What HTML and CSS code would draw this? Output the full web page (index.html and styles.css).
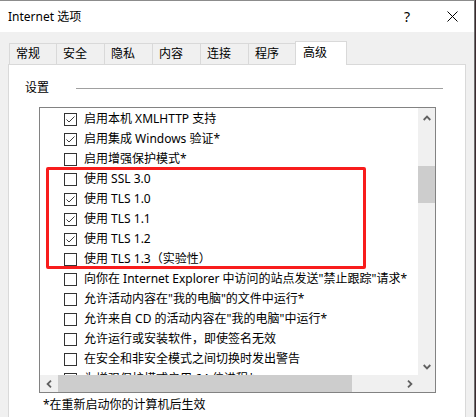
FILE: index.html
```html
<!DOCTYPE html>
<html lang="zh-CN">
<head>
<meta charset="utf-8">
<title>Internet 选项</title>
<link rel="stylesheet" href="styles.css">
</head>
<body>
<div class="window">
  <div class="titlebar">
    <span class="title">Internet 选项</span>
    <span class="help">?</span>
    <svg class="close" width="11" height="11" viewBox="0 0 11 11"><path d="M0.5 0.5 L10.5 10.5 M10.5 0.5 L0.5 10.5" stroke="#000" stroke-width="1" fill="none"/></svg>
  </div>
  <div class="body">
    <div class="tabs">
      <div class="tab narrow">常规</div>
      <div class="tab">安全</div>
      <div class="tab">隐私</div>
      <div class="tab">内容</div>
      <div class="tab">连接</div>
      <div class="tab narrow">程序</div>
      <div class="tab active">高级</div>
    </div>
    <div class="panel">
      <div class="group"><span class="group-label">设置</span><span class="group-line"></span></div>
      <div class="listbox">
        <div class="list">
          <div class="row"><span class="cb"><svg width="11" height="11" viewBox="0 0 11 11"><path d="M1.5 5.5 L4 8 L9.5 2.5" stroke="#3c3c3c" stroke-width="1" fill="none"/></svg></span>启用本机 XMLHTTP 支持</div>
          <div class="row"><span class="cb"><svg width="11" height="11" viewBox="0 0 11 11"><path d="M1.5 5.5 L4 8 L9.5 2.5" stroke="#3c3c3c" stroke-width="1" fill="none"/></svg></span>启用集成 Windows 验证*</div>
          <div class="row"><span class="cb"></span>启用增强保护模式*</div>
          <div class="row"><span class="cb"></span>使用 SSL 3.0</div>
          <div class="row"><span class="cb"><svg width="11" height="11" viewBox="0 0 11 11"><path d="M1.5 5.5 L4 8 L9.5 2.5" stroke="#3c3c3c" stroke-width="1" fill="none"/></svg></span>使用 TLS 1.0</div>
          <div class="row"><span class="cb"><svg width="11" height="11" viewBox="0 0 11 11"><path d="M1.5 5.5 L4 8 L9.5 2.5" stroke="#3c3c3c" stroke-width="1" fill="none"/></svg></span>使用 TLS 1.1</div>
          <div class="row"><span class="cb"><svg width="11" height="11" viewBox="0 0 11 11"><path d="M1.5 5.5 L4 8 L9.5 2.5" stroke="#3c3c3c" stroke-width="1" fill="none"/></svg></span>使用 TLS 1.2</div>
          <div class="row"><span class="cb"></span>使用 TLS 1.3（实验性）</div>
          <div class="row"><span class="cb"></span>向你在 Internet Explorer 中访问的站点发送"禁止跟踪"请求*</div>
          <div class="row"><span class="cb"></span>允许活动内容在"我的电脑"的文件中运行*</div>
          <div class="row"><span class="cb"></span>允许来自 CD 的活动内容在"我的电脑"中运行*</div>
          <div class="row"><span class="cb"></span>允许运行或安装软件，即使签名无效</div>
          <div class="row"><span class="cb"></span>在安全和非安全模式之间切换时发出警告</div>
          <div class="row"><span class="cb"></span>为增强保护模式启用 64 位进程*</div>
        </div>
        <div class="vscroll">
          <div class="arrow up"><svg width="8" height="6" viewBox="0 0 8 6"><path d="M0.7 5 L4 1.6 L7.3 5" stroke="#606060" stroke-width="1.8" fill="none"/></svg></div>
          <div class="vtrack"><div class="vthumb"></div></div>
          <div class="arrow down"><svg width="8" height="6" viewBox="0 0 8 6"><path d="M0.7 1 L4 4.4 L7.3 1" stroke="#606060" stroke-width="1.8" fill="none"/></svg></div>
        </div>
        <div class="hscroll">
          <div class="harrow"><svg width="6" height="8" viewBox="0 0 6 8"><path d="M5 0.7 L1.6 4 L5 7.3" stroke="#606060" stroke-width="1.8" fill="none"/></svg></div>
          <div class="htrack"><div class="hthumb"></div></div>
          <div class="harrow"><svg width="6" height="8" viewBox="0 0 6 8"><path d="M1 0.7 L4.4 4 L1 7.3" stroke="#606060" stroke-width="1.8" fill="none"/></svg></div>
        </div>
        <div class="corner"></div>
        <div class="highlight"></div>
      </div>
      <div class="note">*在重新启动你的计算机后生效</div>
    </div>
  </div>
</div>
</body>
</html>
```
FILE: styles.css
```css
* { box-sizing: border-box; }
html, body { margin: 0; padding: 0; }
body {
  background: #3b2a2f;
  font-family: "Noto Sans", "Noto Sans CJK SC", sans-serif;
  font-size: 12px;
  color: #000;
  width: 476px;
  height: 417px;
  overflow: hidden;
}
.window {
  width: 475px;
  height: 417px;
  border-top: 1px solid #8c8c8c;
  border-right: 1px solid #6f6f6f;
  background: #f0f0f0;
  display: flex;
  flex-direction: column;
  overflow: hidden;
}
.titlebar {
  height: 31px;
  flex: none;
  background: #fff;
  display: flex;
  align-items: center;
  padding-left: 8px;
}
.title { flex: 1; line-height: 16px; }
.help {
  width: 12px;
  text-align: center;
  font-size: 14px;
  line-height: 16px;
  margin-right: 34px;
}
.close { display: block; margin-right: 16px; }
.body { flex: 1; padding-top: 9px; }
.tabs {
  margin-left: 8px;
  width: 458px;
  height: 24px;
  padding-left: 1px;
  border-bottom: 1px solid #d9d9d9;
  display: flex;
  align-items: flex-end;
}
.tab {
  width: 48px;
  height: 21px;
  border-left: 1px solid #d9d9d9;
  border-top: 1px solid #d9d9d9;
  padding-left: 6px;
  line-height: 20px;
  background: #f0f0f0;
  white-space: nowrap;
}
.tab.narrow { width: 47px; }
.tab.active {
  width: 52px;
  height: 24px;
  margin-bottom: -1px;
  border-right: 1px solid #d9d9d9;
  background: #fff;
  padding-left: 7px;
  line-height: 21px;
}
.panel {
  margin-left: 8px;
  width: 458px;
  height: 400px;
  background: #fff;
  border: 1px solid #d9d9d9;
  border-top: none;
  padding-top: 15px;
}
.group {
  display: flex;
  align-items: center;
  height: 16px;
  padding-left: 16px;
  margin-right: 22px;
}
.group-label { width: 51px; line-height: 16px; }
.group-line { flex: 1; height: 1px; background: #a0a0a0; }
.listbox {
  position: relative;
  margin: 11px 0 0 30px;
  width: 397px;
  height: 286px;
  border: 1px solid #828282;
  display: grid;
  grid-template-columns: 378px 17px;
  grid-template-rows: 267px 17px;
}
.list {
  overflow: hidden;
  padding-top: 1px;
  background: #fff;
}
.row {
  height: 20px;
  display: flex;
  align-items: center;
  padding-left: 24px;
  white-space: nowrap;
  line-height: 20px;
}
.cb {
  width: 13px;
  height: 13px;
  flex: none;
  margin-right: 7px;
  border: 1px solid #333;
  background: #fff;
  display: flex;
}
.cb svg { display: block; }
.vscroll {
  background: #f0f0f0;
  display: flex;
  flex-direction: column;
}
.arrow {
  height: 17px;
  flex: none;
  display: flex;
  justify-content: center;
}
.arrow.up { padding-top: 7px; }
.arrow.down { padding-top: 6px; }
.arrow svg, .harrow svg { display: block; }
.vtrack { flex: 1; }
.vthumb { margin-top: 41px; height: 37px; background: #cdcdcd; }
.hscroll { background: #f0f0f0; display: flex; }
.harrow {
  width: 17px;
  flex: none;
  display: flex;
  align-items: center;
  justify-content: center;
}
.htrack { flex: 1; }
.hthumb { margin-left: 1px; width: 294px; height: 100%; background: #cdcdcd; }
.corner { background: #f0f0f0; }
.highlight {
  position: absolute;
  left: 6px;
  top: 59px;
  width: 320px;
  height: 102px;
  border: 3px solid #f81c1c;
  border-radius: 2px;
  pointer-events: none;
}
.note {
  margin: 5px 0 0 34px;
  line-height: 14px;
  white-space: nowrap;
}
```
